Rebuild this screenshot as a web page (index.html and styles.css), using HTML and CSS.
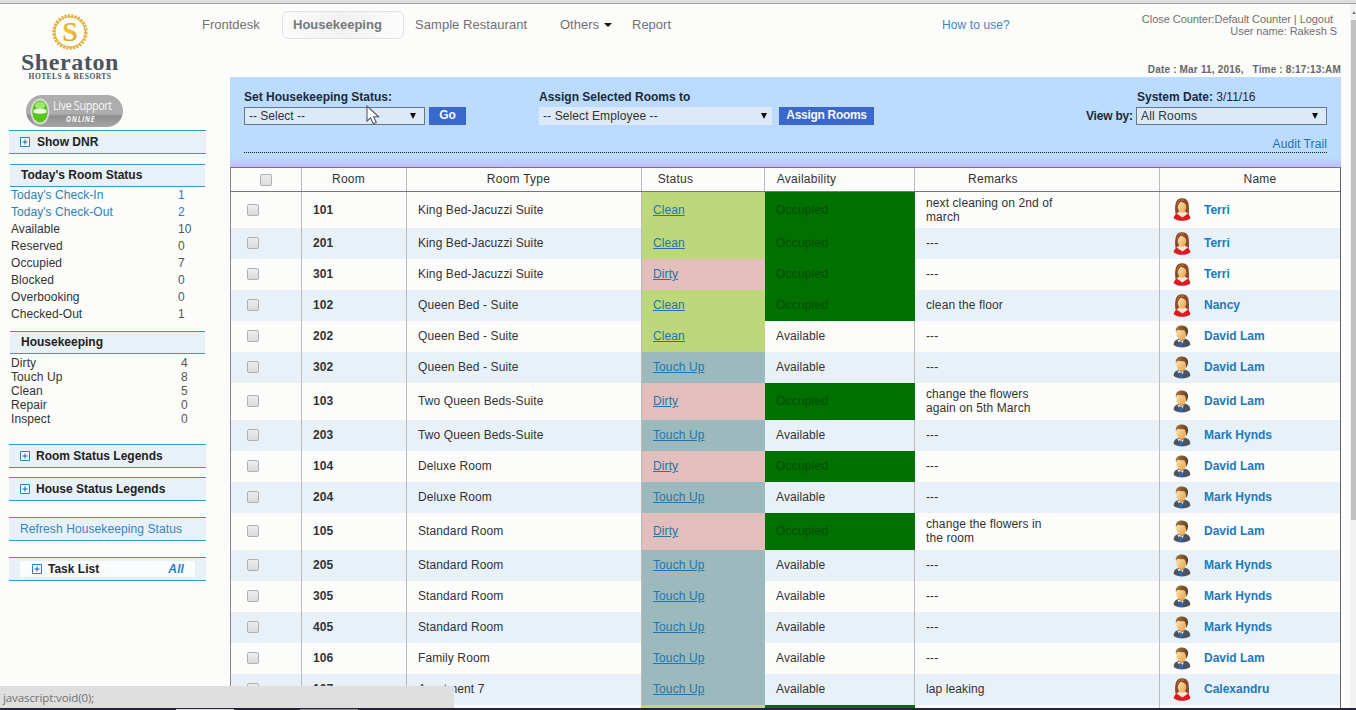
FILE: index.html
```html
<!DOCTYPE html>
<html lang="en">
<head>
<meta charset="utf-8">
<title>Housekeeping</title>
<link rel="stylesheet" href="styles.css">
</head>
<body>
<svg class="defs" aria-hidden="true">
  <defs>
    <linearGradient id="skin" x1="0" x2="1" y1="0" y2="1"><stop offset="0" stop-color="#ffe6b4"/><stop offset="1" stop-color="#e3a04a"/></linearGradient>
    <linearGradient id="hair" x1="0" x2="1" y1="0" y2="0"><stop offset="0" stop-color="#a8763c"/><stop offset="1" stop-color="#5c3f20"/></linearGradient>
    <linearGradient id="gold" x1="0" x2="0" y1="0" y2="1"><stop offset="0" stop-color="#c8961e"/><stop offset=".45" stop-color="#f2c437"/><stop offset="1" stop-color="#cf8f17"/></linearGradient>
    <symbol id="woman" viewBox="0 0 18 23">
      <path d="M3 18C1.500 12 2 7 3.200 4 4.500.8 7 .3 9.300.3c3 0 5.200 1.400 6 4.300.8 3.700 1 9 .2 13.400z" fill="#8f4a29"/>
      <path d="M.6 20.300c.6-3.700 3.500-4.700 5.500-5.200h6c3.200.8 5 2.200 5.300 5.200-4 3.500-12.800 3.300-16.800 0z" fill="#dc1a26"/>
      <path d="M3.500 15.500l3-2h5.500l3 2-5.600 4z" fill="#fbe6cf"/>
      <ellipse cx="9" cy="9.200" rx="4.200" ry="5.600" fill="url(#skin)"/>
      <path d="M4.500 9c.2-3 2.200-3.500 3.200-5.500C10 5 13.200 4.500 13.500 9V3.500L9 1.500 4.800 4z" fill="#8f4a29"/>
      <path d="M4.200 6.500C5 2.800 7.500 1.600 11 2.200" stroke="#bd7d52" stroke-width="1" fill="none"/>
    </symbol>
    <symbol id="man" viewBox="0 0 18 23">
      <path d="M.6 19.800c.4-4 2.500-5.300 5.200-6.100h6.500c3 .8 4.900 2.800 5.100 6.100-4 3.800-13 3.600-16.800 0z" fill="#4b5361"/>
      <path d="M4 14.500l4.100 6.300 2.600-5z" fill="#f4f0e8"/>
      <path d="M6 16.500h2.900l1 5.500H5.800z" fill="#3463ad"/>
      <path d="M5.500 11.500l.5 3.300 2.600 1.600 3-1.600.4-3.300z" fill="#d9963f"/>
      <ellipse cx="8.300" cy="8.800" rx="5" ry="5.900" fill="url(#skin)"/>
      <path d="M3.100 7.500C1.800 2.600 4.800.4 8.800.4c5 0 7.500 3.500 5.800 8.600l-1.500 3c.1-3.200-.4-5.500-1.900-6.800-2.500.3-5.400-.6-6.600-.2-.9.500-1.200 1.500-1.500 2.500z" fill="url(#hair)"/>
    </symbol>
    <symbol id="plus" viewBox="0 0 10 10">
      <path d="M.5.5h9v9h-9z" fill="#f5fbff" stroke="#2484c6"/><path d="M2.500 5h5M5 2.500v5" stroke="#1c62a8"/>
    </symbol>
  </defs>
</svg>
<div class="chrome-edge"></div>
<div class="app">
  <aside class="sidebar">
    <div class="brand">
      <svg class="crest" viewBox="0 0 38 38">
        <circle cx="19" cy="19" r="16" fill="none" stroke="#e3b344" stroke-width="3.600" stroke-dasharray="2.200 1.110"/>
        <circle cx="19" cy="19" r="15.500" fill="none" stroke="#e3b13b" stroke-width="1"/>
        <text x="19" y="28" text-anchor="middle" class="crest-letter" fill="url(#gold)">S</text>
      </svg>
      <div class="brand-name">Sheraton</div>
      <div class="brand-sub">HOTELS &amp; RESORTS</div>
    </div>
    <div class="support">
      <svg class="orb" viewBox="0 0 20 27"><ellipse cx="10" cy="13.500" rx="9.500" ry="13" fill="#d9ddd6"/><ellipse cx="10" cy="13.500" rx="7.800" ry="11" fill="#58c51b"/><ellipse cx="10" cy="7.500" rx="5" ry="4" fill="#9be86a"/><path d="M3.500 12q6.500-2.500 13 0v2.500q-6.500 2.500-13 0z" fill="#f4f8ee"/></svg>
      <div class="support-text"><span>Live Support</span><i>ONLINE</i></div>
    </div>
    <div class="bar dnr"><svg class="plus"><use href="#plus"/></svg><b>Show DNR</b></div>
    <div class="bar title today">Today's Room Status</div>
    <dl class="list rooms">
      <div class="link"><dt>Today's Check-In</dt><dd>1</dd></div>
      <div class="link"><dt>Today's Check-Out</dt><dd>2</dd></div>
      <div><dt>Available</dt><dd>10</dd></div>
      <div><dt>Reserved</dt><dd>0</dd></div>
      <div><dt>Occupied</dt><dd>7</dd></div>
      <div><dt>Blocked</dt><dd>0</dd></div>
      <div><dt>Overbooking</dt><dd>0</dd></div>
      <div><dt>Checked-Out</dt><dd>1</dd></div>
    </dl>
    <div class="bar title keeping">Housekeeping</div>
    <dl class="list tight">
      <div><dt>Dirty</dt><dd>4</dd></div>
      <div><dt>Touch Up</dt><dd>8</dd></div>
      <div><dt>Clean</dt><dd>5</dd></div>
      <div><dt>Repair</dt><dd>0</dd></div>
      <div><dt>Inspect</dt><dd>0</dd></div>
    </dl>
    <div class="bar legend first"><svg class="plus"><use href="#plus"/></svg><b>Room Status Legends</b></div>
    <div class="bar legend"><svg class="plus"><use href="#plus"/></svg><b>House Status Legends</b></div>
    <div class="bar refresh">Refresh Housekeeping Status</div>
    <div class="bar task"><div class="task-in"><svg class="plus"><use href="#plus"/></svg><b>Task List</b><i>All</i></div></div>
  </aside>
  <main class="main">
    <header class="top">
      <nav class="nav">
        <a class="n1">Frontdesk</a><a class="n2">Housekeeping</a><a class="n3">Sample Restaurant</a><a class="n4">Others<span class="caret"></span></a><a class="n5">Report</a>
      </nav>
      <a class="how">How to use?</a>
      <div class="account">
        <div class="counter">Close Counter:Default Counter | Logout</div>
        <div class="user">User name: Rakesh S</div>
        <div class="clock">Date : Mar 11, 2016, &nbsp; Time : 8:17:13:AM</div>
      </div>
    </header>
    <section class="panel">
      <div class="controls">
        <div class="set"><label>Set Housekeeping Status:</label>
          <div class="line"><span class="select s1">-- Select --<span class="arrow"></span></span><span class="btn go">Go</span></div></div>
        <div class="assign"><label>Assign Selected Rooms to</label>
          <div class="line"><span class="select s2">-- Select Employee --<span class="arrow"></span></span><span class="btn as">Assign Rooms</span></div></div>
        <div class="view"><div class="sysdate"><b>System Date:</b> 3/11/16</div>
          <div class="line"><b class="vb">View by:</b><span class="select s3">All Rooms<span class="arrow"></span></span></div></div>
      </div>
      <div class="audit"><a>Audit Trail</a></div>
    </section>
    <section class="grid">
      <div class="row head"><div class="c"><span class="box"></span></div><div>Room</div><div>Room Type</div><div class="hs">Status</div><div class="ha">Availability</div><div class="hr">Remarks</div><div class="hn">Name</div></div>
      <div class="row tall lead"><div class="c"><span class="box"></span></div><div class="no">101</div><div class="type">King Bed-Jacuzzi Suite</div><div class="clean"><a>Clean</a></div><div class="occ">Occupied</div><div class="rem">next cleaning on 2nd of<br>march</div><div class="name"><svg><use href="#woman"/></svg>Terri</div></div>
      <div class="row alt"><div class="c"><span class="box"></span></div><div class="no">201</div><div class="type">King Bed-Jacuzzi Suite</div><div class="clean"><a>Clean</a></div><div class="occ">Occupied</div><div class="rem">---</div><div class="name"><svg><use href="#woman"/></svg>Terri</div></div>
      <div class="row"><div class="c"><span class="box"></span></div><div class="no">301</div><div class="type">King Bed-Jacuzzi Suite</div><div class="dirty"><a>Dirty</a></div><div class="occ">Occupied</div><div class="rem">---</div><div class="name"><svg><use href="#woman"/></svg>Terri</div></div>
      <div class="row alt"><div class="c"><span class="box"></span></div><div class="no">102</div><div class="type">Queen Bed - Suite</div><div class="clean"><a>Clean</a></div><div class="occ">Occupied</div><div class="rem">clean the floor</div><div class="name"><svg><use href="#woman"/></svg>Nancy</div></div>
      <div class="row"><div class="c"><span class="box"></span></div><div class="no">202</div><div class="type">Queen Bed - Suite</div><div class="clean"><a>Clean</a></div><div class="av">Available</div><div class="rem">---</div><div class="name"><svg><use href="#man"/></svg>David Lam</div></div>
      <div class="row alt"><div class="c"><span class="box"></span></div><div class="no">302</div><div class="type">Queen Bed - Suite</div><div class="touch"><a>Touch Up</a></div><div class="av">Available</div><div class="rem">---</div><div class="name"><svg><use href="#man"/></svg>David Lam</div></div>
      <div class="row tall"><div class="c"><span class="box"></span></div><div class="no">103</div><div class="type">Two Queen Beds-Suite</div><div class="dirty"><a>Dirty</a></div><div class="occ">Occupied</div><div class="rem">change the flowers<br>again on 5th March</div><div class="name"><svg><use href="#man"/></svg>David Lam</div></div>
      <div class="row alt"><div class="c"><span class="box"></span></div><div class="no">203</div><div class="type">Two Queen Beds-Suite</div><div class="touch"><a>Touch Up</a></div><div class="av">Available</div><div class="rem">---</div><div class="name"><svg><use href="#man"/></svg>Mark Hynds</div></div>
      <div class="row"><div class="c"><span class="box"></span></div><div class="no">104</div><div class="type">Deluxe Room</div><div class="dirty"><a>Dirty</a></div><div class="occ">Occupied</div><div class="rem">---</div><div class="name"><svg><use href="#man"/></svg>David Lam</div></div>
      <div class="row alt"><div class="c"><span class="box"></span></div><div class="no">204</div><div class="type">Deluxe Room</div><div class="touch"><a>Touch Up</a></div><div class="av">Available</div><div class="rem">---</div><div class="name"><svg><use href="#man"/></svg>Mark Hynds</div></div>
      <div class="row tall"><div class="c"><span class="box"></span></div><div class="no">105</div><div class="type">Standard Room</div><div class="dirty"><a>Dirty</a></div><div class="occ">Occupied</div><div class="rem">change the flowers in<br>the room</div><div class="name"><svg><use href="#man"/></svg>David Lam</div></div>
      <div class="row alt"><div class="c"><span class="box"></span></div><div class="no">205</div><div class="type">Standard Room</div><div class="touch"><a>Touch Up</a></div><div class="av">Available</div><div class="rem">---</div><div class="name"><svg><use href="#man"/></svg>Mark Hynds</div></div>
      <div class="row"><div class="c"><span class="box"></span></div><div class="no">305</div><div class="type">Standard Room</div><div class="touch"><a>Touch Up</a></div><div class="av">Available</div><div class="rem">---</div><div class="name"><svg><use href="#man"/></svg>Mark Hynds</div></div>
      <div class="row alt"><div class="c"><span class="box"></span></div><div class="no">405</div><div class="type">Standard Room</div><div class="touch"><a>Touch Up</a></div><div class="av">Available</div><div class="rem">---</div><div class="name"><svg><use href="#man"/></svg>Mark Hynds</div></div>
      <div class="row"><div class="c"><span class="box"></span></div><div class="no">106</div><div class="type">Family Room</div><div class="touch"><a>Touch Up</a></div><div class="av">Available</div><div class="rem">---</div><div class="name"><svg><use href="#man"/></svg>David Lam</div></div>
      <div class="row alt"><div class="c"><span class="box"></span></div><div class="no">107</div><div class="type">Apartment 7</div><div class="touch"><a>Touch Up</a></div><div class="av">Available</div><div class="rem">lap leaking</div><div class="name"><svg><use href="#woman"/></svg>Calexandru</div></div>
      <div class="row"><div class="c"></div><div></div><div></div><div class="clean"></div><div class="occ"></div><div></div><div></div></div>
    </section>
  </main>
  <div class="scroll"><span class="up"></span><div class="thumb"></div><span class="down"></span></div>
</div>
<svg class="cursor" viewBox="0 0 14 20"><path d="M1 1v15l3.600-3.200 2.700 6 3-1.300-2.700-5.700h5z" fill="#fff" stroke="#555b66" stroke-width="1.100"/></svg>
<div class="status">javascript:void(0);</div>
<div class="taskbar"><span class="t1"></span><span class="t2"></span></div>
</body>
</html>
```
FILE: styles.css
```css
* { box-sizing: border-box; }
body { margin: 0; height: 710px; overflow: hidden; position: relative; background: #fcfcfb; font: 12px/14px "Liberation Sans", Arial, sans-serif; color: #333; }
.defs { position: absolute; width: 0; height: 0; }
.chrome-edge { height: 4px; background: #dedede; border-bottom: 1px solid #a0a0a0; }
.app { display: grid; grid-template-columns: 206px 1fr 6px; height: 706px; overflow: hidden; }

.sidebar { padding-left: 9px; letter-spacing: .1px; }
.brand { height: 91px; width: 122px; padding-top: 9px; text-align: center; color: #4c535c; white-space: nowrap; }
.crest { display: block; width: 38px; height: 38px; margin: 0 auto; }
.crest-letter { font: bold 28px "Liberation Serif", serif; }
.brand-name { font: bold 24px/24px "Liberation Serif", serif; letter-spacing: .6px; margin-top: -1px; color: #4c535c; }
.brand-sub { font: bold 7.500px/6px "Liberation Serif", serif; letter-spacing: .45px; height: 9px; }
.support { display: flex; align-items: center; width: 97px; height: 32px; margin-left: 17px; padding-left: 4px; border-radius: 16px; background: linear-gradient(#adadad 0 58%, #8f8f8f 66%, #a5a5a5); color: #f7f7f7; }
.orb { width: 20px; height: 27px; }
.support-text { display: flex; flex-direction: column; margin-left: 3px; }
.support-text span { font: 12px/15px "Open Sans", sans-serif; letter-spacing: -.4px; transform: scaleX(.9); transform-origin: left; white-space: nowrap; }
.support-text i { font: italic bold 8px/12px "Open Sans", sans-serif; margin-left: 13px; letter-spacing: .9px; transform: scaleX(.85); transform-origin: left; }
.bar { display: flex; align-items: center; width: 197px; height: 24px; border-top: 1px solid #3d96c8; border-bottom: 1px solid #3d96c8; background: #e9f1f8; padding-left: 11px; white-space: nowrap; }
.bar b { color: #222; letter-spacing: 0; }
.plus { width: 10px; height: 10px; flex: none; margin-right: 6px; }
.dnr { margin-top: 3px; padding-bottom: 1px; }
.dnr .plus { margin-right: 7px; }
.title { width: 195px; margin-left: 1px; height: 23px; font-weight: bold; color: #222; letter-spacing: 0; padding-bottom: 1px; }
.today { margin-top: 10px; }
.list { margin: 0 0 0 2px; color: #333; }
.list div { display: flex; height: 17px; line-height: 17px; }
.rooms { letter-spacing: .05px; }
.list dt { width: 167px; }
.list dd { margin: 0; color: #555; }
.list .link, .list .link dd { color: #2b80bd; }
.tight div { height: 14px; line-height: 14px; }
.tight dt { width: 170px; }
.keeping { margin-top: 8px; }
.tight { padding-top: 2px; }
.legend { margin-top: 9px; }
.legend.first { margin-top: 18px; }
.refresh { margin-top: 16px; color: #2f86c4; }
.task { margin-top: 16px; padding-bottom: 1px; }
.task-in { display: flex; align-items: center; height: 16px; width: 175px; padding-left: 12px; background: #fafcfd; }
.task-in i { margin-left: auto; margin-right: 11px; color: #2c7fc0; font-weight: bold; }

.main { padding-right: 9px; }
.top { display: flex; height: 73px; margin-left: -4px; color: #717171; }
.nav { display: flex; align-items: center; height: 28px; margin-top: 7px; width: 740px; font-size: 13px; }
.n1 { width: 80px; }
.n2 { width: 122px; height: 28px; line-height: 26px; padding-left: 10px; border: 1px solid #e3e3e3; border-radius: 6px; font-weight: bold; color: #777; background: linear-gradient(90deg, #fcfcfb, #f2f2f2 50%, #fcfcfb); }
.n3 { margin-left: 11px; width: 145px; letter-spacing: .05px; }
.n4 { width: 72px; display: flex; align-items: center; }
.caret { margin-left: 5px; border: 4px solid transparent; border-top-color: #111; border-bottom: 0; }
.how { margin-top: 14px; font-size: 12px; letter-spacing: .1px; color: #3e86be; }
.account { margin-left: auto; text-align: right; white-space: nowrap; font-size: 11px; line-height: 12px; letter-spacing: -.05px; padding-top: 9px; }
.counter { padding-right: 8px; }
.user { padding-right: 4px; }
.clock { margin-top: 27px; font-size: 10px; font-weight: bold; color: #666; letter-spacing: .18px; }

.panel { height: 90px; margin-left: 24px; padding: 13px 14px 0; background: linear-gradient(#bbdcff 0 80px, #bfc0ff 89px); color: #1c2a38; }
.controls { display: flex; height: 49px; }
.controls label, .controls b { font-weight: bold; display: inline-block; height: 16px; }
.set { width: 295px; }
.assign { width: 490px; }
.view { margin-left: auto; width: 241px; }
.sysdate { padding-left: 51px; height: 17px; }
.line { display: flex; align-items: center; height: 18px; }
.set .line, .assign .line { margin-top: 1px; }
.select { display: flex; align-items: center; justify-content: space-between; height: 18px; padding: 0 8px 1px 4px; background: #dbe9f8; color: #333; }
.s1 { width: 181px; border: 1px solid #68788a; }
.s2 { width: 233px; padding-right: 5px; letter-spacing: .1px; }
.s3 { width: 191px; border: 1px solid #68788a; margin-left: auto; letter-spacing: .15px; }
.arrow { border: 3.500px solid transparent; border-top: 6px solid #111; border-bottom: 0; }
.btn { height: 18px; line-height: 17px; text-align: center; font-weight: bold; color: #f4f8ff; background: #3868cc; }
.go { width: 37px; margin-left: 4px; }
.as { width: 95px; margin-left: 7px; letter-spacing: -.3px; }
.vb { line-height: 16px; letter-spacing: -.2px; }
.audit { height: 14px; line-height: 11px; text-align: right; color: #1f6fb5; border-bottom: 1px dotted #222; letter-spacing: .1px; }

.grid { margin-left: 24px; border-left: 1px solid #858585; border-right: 1px solid #666; border-top: 1px solid #777; letter-spacing: .1px; }
.row { display: grid; grid-template-columns: 71px 105px 235px 123px 150px 245px 180px; height: 31px; }
.row > div { display: flex; align-items: center; border-right: 1px solid #bbb; padding: 0 0 1px 11px; }
.row > div:last-child { border-right: 0; }
.row.alt { background: #e8f1f7; }
.row.tall { height: 37px; }
.row.lead { height: 36px; }
.row.head { height: 24px; border-bottom: 1px solid #777; letter-spacing: .25px; }
.row.head > div { justify-content: center; padding: 0 11px 2px 0; }
.row.head > .c { padding: 0; }
.row.head > .hs { padding-right: 55px; }
.row.head > .ha { padding-right: 66px; }
.row.head > .hr { padding-right: 88px; }
.row.head > .hn { padding: 0 0 2px 20px; }
.row:not(.head) .c { padding-left: 16px; }
.box { width: 12px; height: 12px; border: 1px solid #b0b0b0; border-radius: 2px; background: linear-gradient(#ededed, #dcdcdc); }
.no { font-weight: bold; }
.row .clean { background: #bdd77b; border-color: #bdd77b; }
.row .dirty { background: #e2bfbd; border-color: #e2bfbd; }
.row .touch { background: #9cbabd; border-color: #9cbabd; }
.row .occ { background: #007000; color: #004c00; border-color: #007000; letter-spacing: .2px; }
.row a { color: #2376ac; text-decoration: underline; }
.row .name { color: #2279bd; font-weight: bold; padding-left: 13px; letter-spacing: 0; }
.name svg { width: 18px; height: 23px; margin-right: 13px; }

.scroll { display: flex; flex-direction: column; align-items: center; background: #f1f1f1; padding: 7px 0 8px 1px; }
.thumb { width: 5px; height: 500px; background: #c0c0c0; margin-top: 6px; }
.up, .down { border: 2px solid transparent; }
.up { border-bottom: 3px solid #888; border-top: 0; }
.down { border-top: 3px solid #555; border-bottom: 0; margin-top: auto; }

.cursor { position: absolute; left: 366px; top: 105px; width: 14px; height: 20px; }
.status { position: absolute; left: 0; bottom: 2px; width: 454px; height: 22px; padding-left: 3px; background: #dfdfdf; color: #707070; font: 11.500px/23px "Open Sans", sans-serif; letter-spacing: -.1px; }
.taskbar { position: absolute; left: 0; right: 0; bottom: 0; height: 2px; background: #25233b; display: flex; padding-left: 176px; }
.taskbar span { height: 1px; margin-top: 1px; background: #ddd; width: 58px; }
.taskbar .t2 { margin-left: 66px; background: #888; }
```
